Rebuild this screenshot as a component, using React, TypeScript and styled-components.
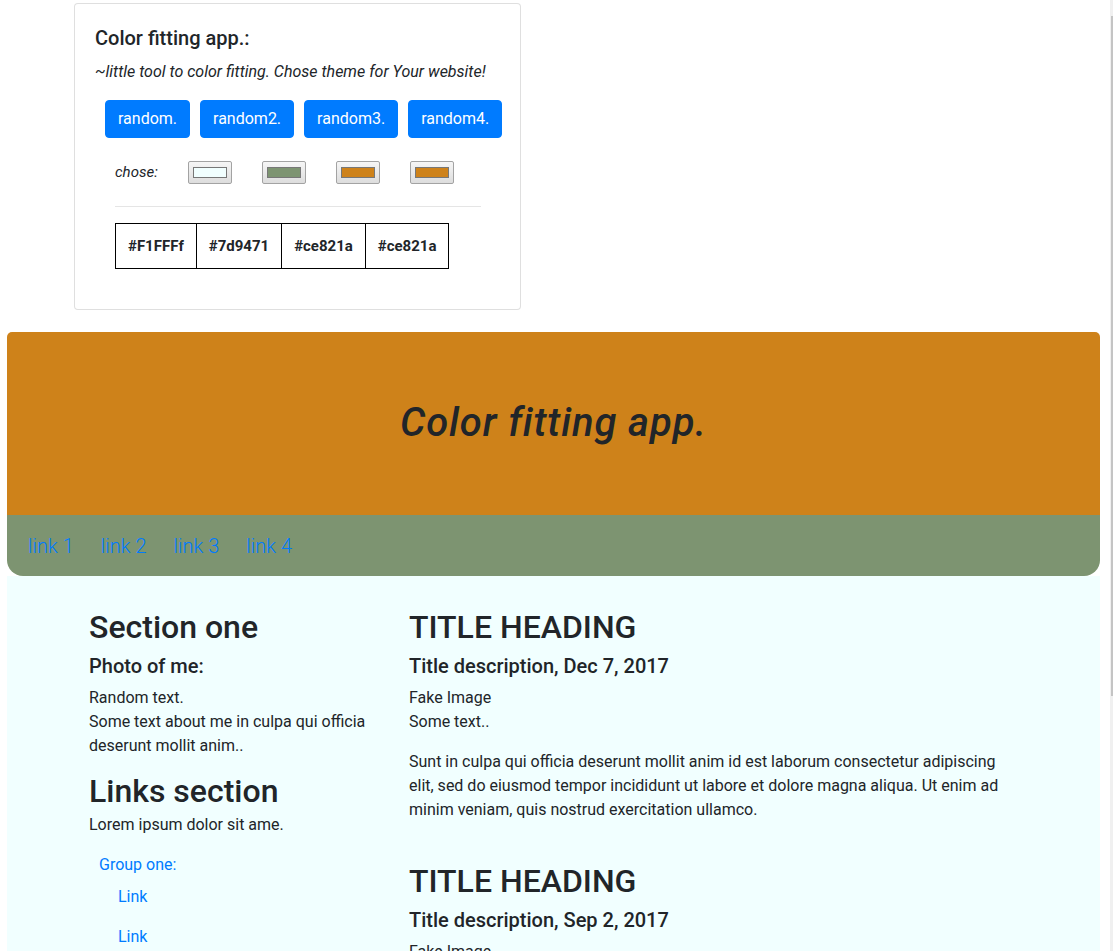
import React from "react";
import styled, { createGlobalStyle } from "styled-components";

const GlobalStyle = createGlobalStyle`
  html, body { margin: 0; padding: 0; }
  body {
    background: #ffffff;
    color: #212529;
    font-family: Roboto, "Noto Sans", Arial, sans-serif;
    font-size: 16px;
    line-height: 1.5;
  }
`;

const Page = styled.div`
  display: flex;
  flex-direction: column;
  padding-top: 3px;
`;

const ScrollTrack = styled.div`
  position: fixed;
  top: 0;
  right: 0;
  width: 3px;
  height: 100vh;
  background: #f0f0f0;
`;

const ScrollThumb = styled.div`
  position: absolute;
  top: 16px;
  left: 1px;
  width: 2px;
  height: 680px;
  background: #c4c4c4;
`;

const ToolCard = styled.section`
  margin-left: 74px;
  width: 447px;
  box-sizing: border-box;
  border: 1px solid rgba(0, 0, 0, 0.125);
  border-radius: 4px;
  background: #fff;
  padding: 22px 20px 40px;
`;

const CardTitle = styled.h5`
  margin: 0 0 10px;
  font-size: 20px;
  font-weight: 500;
  line-height: 24px;
`;

const CardSub = styled.p`
  margin: 0 0 16px;
  font-style: italic;
  font-size: 16px;
`;

const ButtonRow = styled.div`
  display: flex;
  gap: 10px;
  padding-left: 10px;
`;

const Button = styled.button`
  font-family: inherit;
  font-size: 16px;
  line-height: 24px;
  color: #fff;
  background: #007bff;
  border: 1px solid #007bff;
  border-radius: 4px;
  padding: 6px 12px;
`;

const ChoseRow = styled.div`
  display: flex;
  align-items: center;
  gap: 30px;
  margin: 23px 0 0 20px;
  height: 23px;
`;

const ChoseLabel = styled.span`
  font-style: italic;
  font-size: 15px;
`;

const Swatch = styled.div`
  width: 44px;
  height: 23px;
  box-sizing: border-box;
  border: 1px solid #a3a3a3;
  border-radius: 2px;
  background: linear-gradient(#f6f6f6, #dddddd);
  display: flex;
  align-items: center;
  justify-content: center;
`;

const SwatchFill = styled.div<{ $c: string }>`
  width: 34px;
  height: 11px;
  box-sizing: border-box;
  border: 1px solid #777;
  background: ${(p) => p.$c};
`;

const Divider = styled.hr`
  margin: 22px 0 16px 20px;
  width: 366px;
  border: 0;
  border-top: 1px solid rgba(0, 0, 0, 0.1);
`;

const ColorTable = styled.table`
  margin-left: 20px;
  border-collapse: collapse;
`;

const Cell = styled.td`
  border: 1px solid #000;
  padding: 12px 12px;
  font-weight: 700;
  font-size: 15px;
  line-height: 20px;
`;

const Main = styled.main`
  margin: 22px 0 0 7px;
  width: 1093px;
`;

const Jumbotron = styled.header`
  background: #ce821a;
  border-radius: 5px 5px 0 0;
  padding: 67px 32px 61px;
  text-align: center;
`;

const JumboTitle = styled.h1`
  margin: 0 0 7px;
  font-size: 40px;
  font-style: italic;
  font-weight: 500;
  line-height: 48px;
  letter-spacing: 0.9px;
`;

const NavBar = styled.nav`
  background: #7d9471;
  border-radius: 0 0 16px 16px;
  height: 61px;
  display: flex;
  align-items: center;
  gap: 27px;
  padding: 0 21px;
  box-sizing: border-box;
`;

const NavLink = styled.a`
  color: #007bff;
  font-size: 20px;
  font-weight: 300;
  text-decoration: none;
`;

const Content = styled.div`
  background: #f1ffff;
  padding: 32px 0 120px 82px;
  display: grid;
  grid-template-columns: 290px 610px;
  column-gap: 30px;
`;

const Column = styled.div`
  display: flex;
  flex-direction: column;
`;

const H2 = styled.h2`
  margin: 0 0 8px;
  font-size: 32px;
  font-weight: 500;
  line-height: 38px;
`;

const LinksHeading = styled(H2)`
  margin: -2px 0 3px;
`;

const H5 = styled.h5`
  margin: 0 0 8px;
  font-size: 20px;
  font-weight: 500;
  line-height: 24px;
`;

const P = styled.p`
  margin: 0 0 16px;
`;

const GroupList = styled.ul`
  list-style: none;
  margin: 0;
  padding: 0 0 0 10px;
`;

const GroupLabel = styled.li`
  color: #007bff;
  font-size: 16px;
  line-height: 24px;
`;

const SubLink = styled.a`
  display: block;
  color: #007bff;
  font-size: 16px;
  line-height: 24px;
  padding: 8px 0 8px 19px;
  text-decoration: none;
`;

const Spacer = styled.div`
  height: 24px;
`;

const swatches = ["#F1FFFF", "#7d9471", "#ce821a", "#ce821a"];
const codes = ["#F1FFFf", "#7d9471", "#ce821a", "#ce821a"];

const Article: React.FC<{ date: string }> = ({ date }) => (
  <>
    <H2>TITLE HEADING</H2>
    <H5>Title description, {date}</H5>
    <P>
      Fake Image
      <br />
      Some text..
    </P>
    <P>
      Sunt in culpa qui officia deserunt mollit anim id est laborum consectetur
      adipiscing elit, sed do eiusmod tempor incididunt ut labore et dolore magna
      aliqua. Ut enim ad minim veniam, quis nostrud exercitation ullamco.
    </P>
  </>
);

export default function App() {
  return (
    <Page>
      <GlobalStyle />
      <ScrollTrack>
        <ScrollThumb />
      </ScrollTrack>
      <ToolCard>
        <CardTitle>Color fitting app.:</CardTitle>
        <CardSub>~little tool to color fitting. Chose theme for Your website!</CardSub>
        <ButtonRow>
          <Button>random.</Button>
          <Button>random2.</Button>
          <Button>random3.</Button>
          <Button>random4.</Button>
        </ButtonRow>
        <ChoseRow>
          <ChoseLabel>chose:</ChoseLabel>
          {swatches.map((c, i) => (
            <Swatch key={i}>
              <SwatchFill $c={c} />
            </Swatch>
          ))}
        </ChoseRow>
        <Divider />
        <ColorTable>
          <tbody>
            <tr>
              {codes.map((c, i) => (
                <Cell key={i}>{c}</Cell>
              ))}
            </tr>
          </tbody>
        </ColorTable>
      </ToolCard>
      <Main>
        <Jumbotron>
          <JumboTitle>Color fitting app.</JumboTitle>
        </Jumbotron>
        <NavBar>
          <NavLink href="#">link 1</NavLink>
          <NavLink href="#">link 2</NavLink>
          <NavLink href="#">link 3</NavLink>
          <NavLink href="#">link 4</NavLink>
        </NavBar>
        <Content>
          <Column>
            <H2>Section one</H2>
            <H5>Photo of me:</H5>
            <P>
              Random text.
              <br />
              Some text about me in culpa qui officia deserunt mollit anim..
            </P>
            <LinksHeading>Links section</LinksHeading>
            <P>Lorem ipsum dolor sit ame.</P>
            <GroupList>
              <GroupLabel>Group one:</GroupLabel>
              <li>
                <SubLink href="#">Link</SubLink>
              </li>
              <li>
                <SubLink href="#">Link</SubLink>
              </li>
              <li>
                <SubLink href="#">Link</SubLink>
              </li>
            </GroupList>
          </Column>
          <Column>
            <Article date="Dec 7, 2017" />
            <Spacer />
            <Article date="Sep 2, 2017" />
          </Column>
        </Content>
      </Main>
    </Page>
  );
}
